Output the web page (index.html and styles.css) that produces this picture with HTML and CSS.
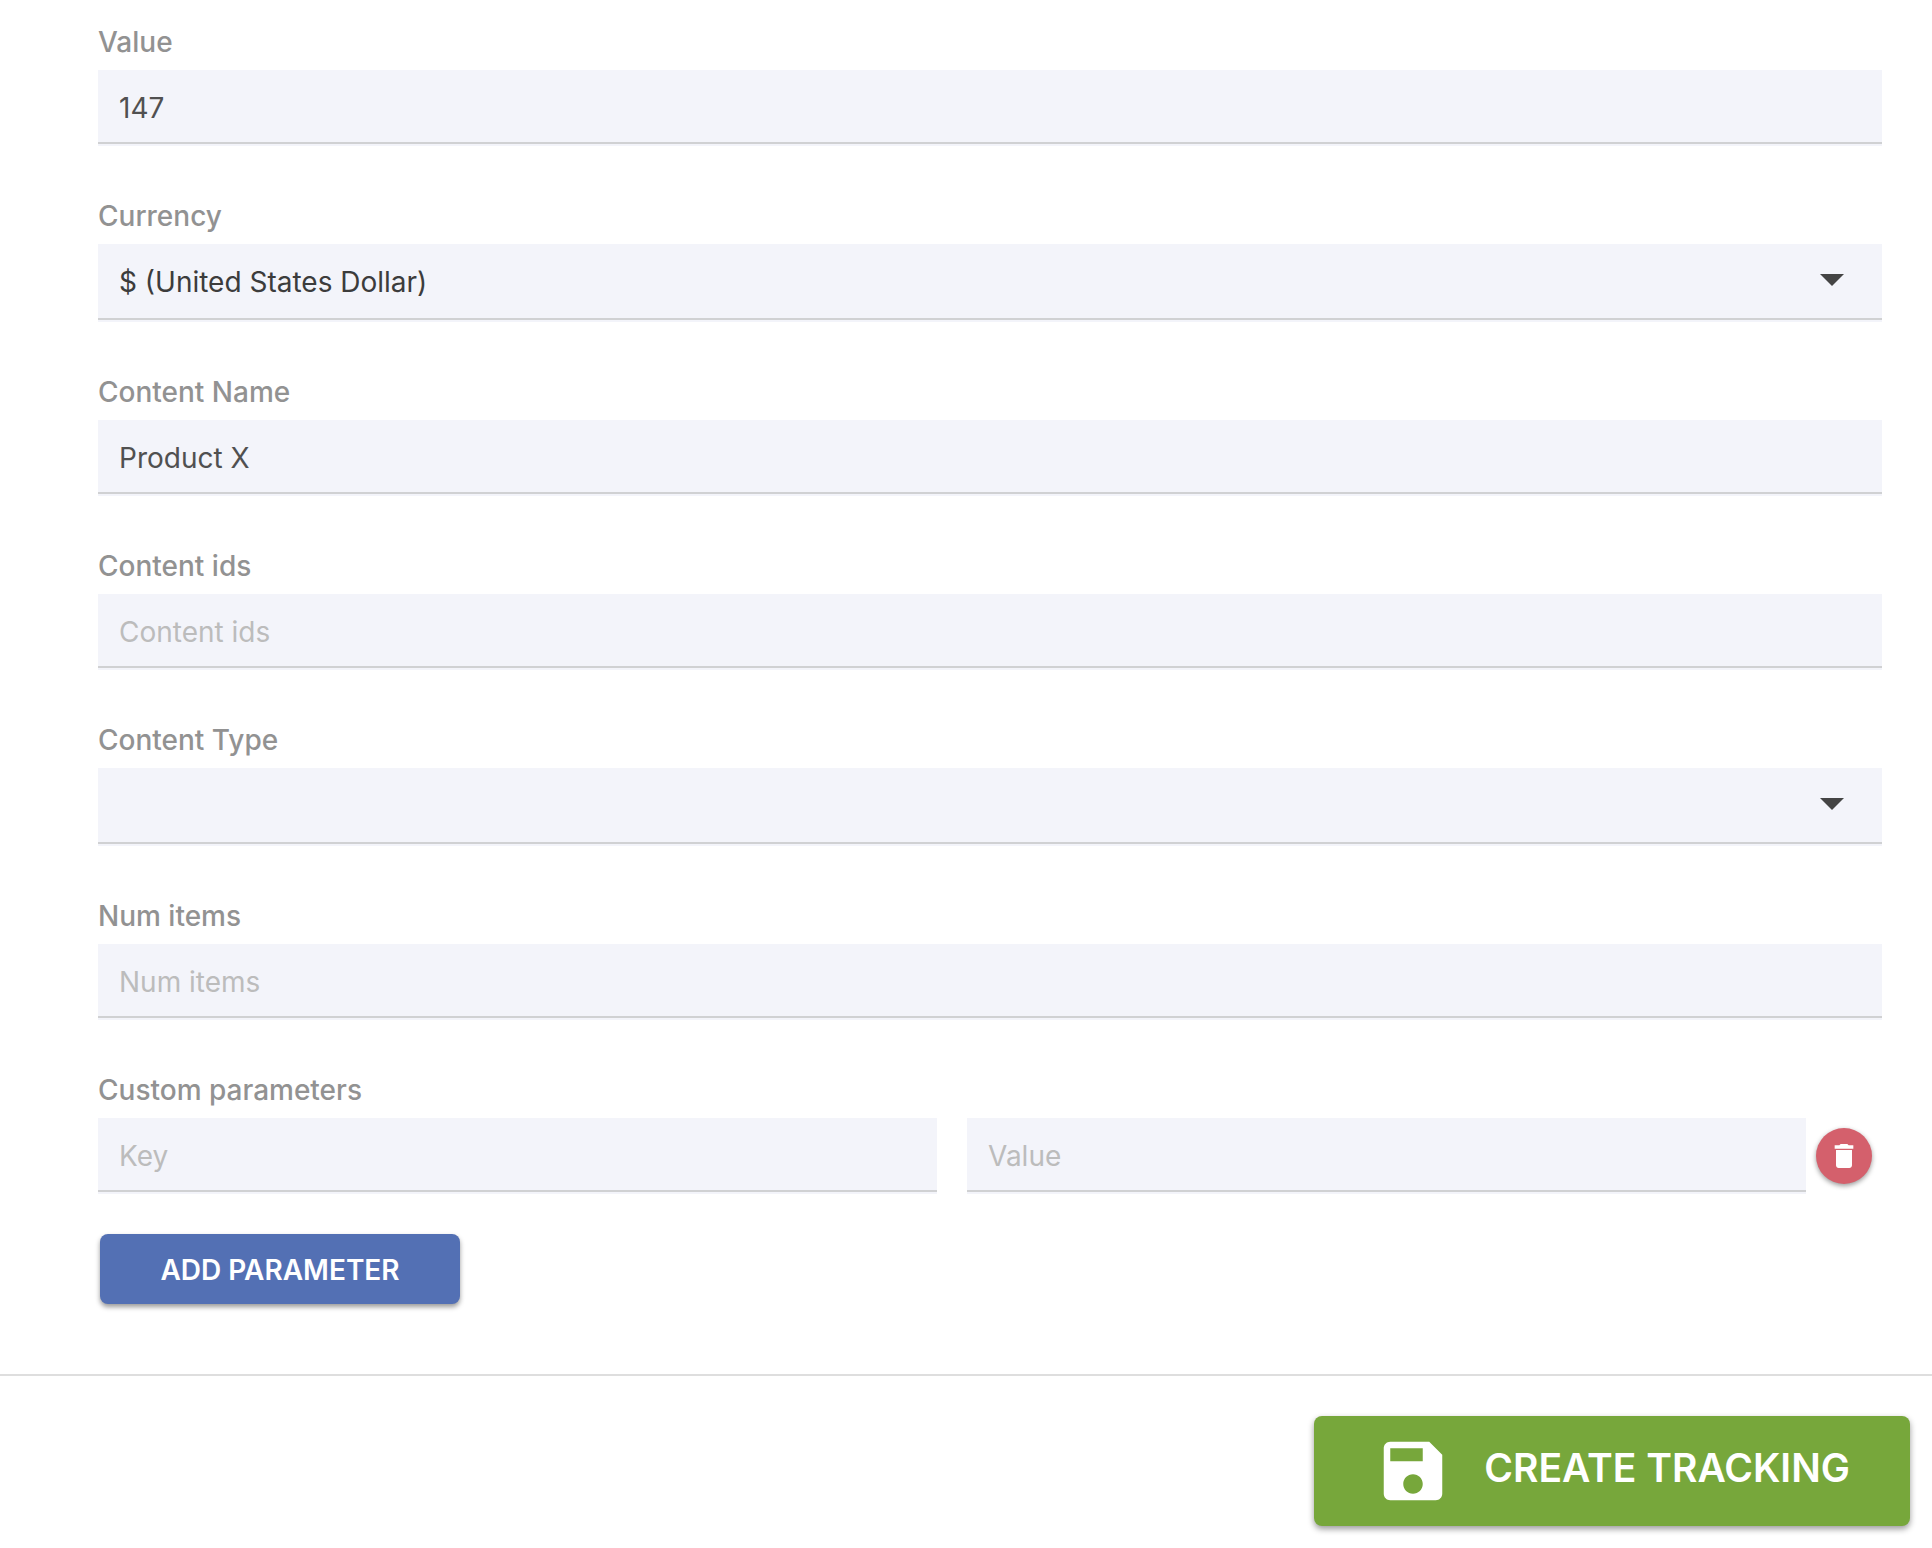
FILE: index.html
```html
<!DOCTYPE html>
<html lang="en">
<head>
<meta charset="utf-8">
<meta name="viewport" content="width=device-width, initial-scale=1">
<title>Create tracking</title>
<link rel="stylesheet" href="styles.css">
</head>
<body>
<form class="tracking-form">
  <div class="fields">
    <div class="field">
      <label class="field-label" for="value">Value</label>
      <input class="control" id="value" type="text" value="147">
    </div>
    <div class="field">
      <label class="field-label" for="currency">Currency</label>
      <div class="select-wrap">
        <select class="control control-select" id="currency">
          <option>$ (United States Dollar)</option>
        </select>
        <svg class="select-arrow" viewBox="0 0 24 12" aria-hidden="true"><path d="M0 0h24L12 12z"/></svg>
      </div>
    </div>
    <div class="field">
      <label class="field-label" for="content-name">Content Name</label>
      <input class="control" id="content-name" type="text" value="Product X">
    </div>
    <div class="field">
      <label class="field-label" for="content-ids">Content ids</label>
      <input class="control" id="content-ids" type="text" placeholder="Content ids">
    </div>
    <div class="field">
      <label class="field-label" for="content-type">Content Type</label>
      <div class="select-wrap">
        <select class="control control-select" id="content-type">
          <option></option>
        </select>
        <svg class="select-arrow" viewBox="0 0 24 12" aria-hidden="true"><path d="M0 0h24L12 12z"/></svg>
      </div>
    </div>
    <div class="field">
      <label class="field-label" for="num-items">Num items</label>
      <input class="control" id="num-items" type="text" placeholder="Num items">
    </div>
    <div class="field">
      <label class="field-label" for="param-key">Custom parameters</label>
      <div class="param-row">
        <input class="control" id="param-key" type="text" placeholder="Key">
        <input class="control" type="text" placeholder="Value" aria-label="Parameter value">
        <button class="delete-button" type="button" aria-label="Delete parameter">
          <svg class="delete-icon" viewBox="0 0 24 24" aria-hidden="true"><path d="M6 19c0 1.100.9 2 2 2h8c1.100 0 2-.9 2-2V7.500H6zM19 4h-3.500l-1-1h-5l-1 1H5v2.500h14z"/></svg>
        </button>
      </div>
    </div>
    <button class="add-button" type="button">ADD PARAMETER</button>
  </div>
  <footer class="form-footer">
    <button class="create-button" type="submit">
      <svg class="save-icon" viewBox="0 0 24 24" aria-hidden="true"><path d="M17 3H5c-1.110 0-2 .9-2 2v14c0 1.100.89 2 2 2h14c1.100 0 2-.9 2-2V7l-4-4zm-5 16c-1.660 0-3-1.340-3-3s1.340-3 3-3 3 1.340 3 3-1.340 3-3 3zm3-10H5V5h10v4z"/></svg>
      <span class="create-text">CREATE TRACKING</span>
    </button>
  </footer>
</form>
</body>
</html>
```
FILE: styles.css
```css
* { box-sizing: border-box; }

body {
  margin: 0;
  background: #fff;
  font-family: Inter, "Liberation Sans", sans-serif;
  font-size: 28px;
}

input, select, button { font: inherit; }

.fields {
  display: flex;
  flex-direction: column;
  padding: 24px 50px 70px 98px;
}

.field { margin-bottom: 52px; }

.field-label {
  display: block;
  margin-bottom: 10px;
  line-height: 36px;
  font-weight: 500;
  color: #929292;
}

.control {
  display: block;
  width: 100%;
  height: 76px;
  margin: 0;
  padding: 0 21px;
  border: 0;
  border-radius: 0;
  outline: 0;
  background: linear-gradient(#d0d1d3, #d0d1d3) 0 calc(100% - 2px) / 100% 2px no-repeat #f3f4fa;
  color: #505050;
}

.control::placeholder {
  color: #bcbcbc;
  opacity: 1;
}

.select-wrap { position: relative; }

.control-select {
  appearance: none;
  height: 78px;
  padding: 0 100px 2px 21px;
  color: #3c3c3c;
}

.select-arrow {
  position: absolute;
  top: 30px;
  right: 38px;
  width: 24px;
  height: 12px;
  fill: #444;
  pointer-events: none;
}

.param-row {
  display: flex;
  align-items: center;
  padding-right: 10px;
}

.param-row .control {
  flex: 1;
  min-width: 0;
}

.param-row .control + .control { margin-left: 30px; }

.delete-button {
  display: flex;
  align-items: center;
  justify-content: center;
  flex: none;
  width: 56px;
  height: 56px;
  margin-left: 10px;
  padding: 0;
  border: 0;
  border-radius: 50%;
  background: #d4606c;
  box-shadow: 0 2px 5px rgba(0, 0, 0, 0.4);
}

.delete-icon {
  width: 32px;
  height: 32px;
  fill: #fff;
}

.add-button {
  align-self: flex-start;
  min-width: 360px;
  height: 70px;
  margin: -12px 0 0 2px;
  padding: 2px 40px 0;
  border: 0;
  border-radius: 8px;
  background: #5370b4;
  box-shadow: 0 3px 5px rgba(0, 0, 0, 0.4);
  color: #fff;
  font-weight: 600;
}

.form-footer {
  display: flex;
  justify-content: flex-end;
  padding: 40px 22px 22px;
  border-top: 2px solid #dedede;
}

.create-button {
  display: flex;
  align-items: center;
  gap: 32px;
  height: 110px;
  padding: 0 60px;
  border: 0;
  border-radius: 8px;
  background: #77a73b;
  box-shadow: 0 3px 6px rgba(0, 0, 0, 0.4);
  color: #fff;
  font-size: 39px;
  font-weight: 600;
}

.save-icon {
  width: 78px;
  height: 78px;
  fill: #fff;
}

.create-text { padding-bottom: 8px; }
```
